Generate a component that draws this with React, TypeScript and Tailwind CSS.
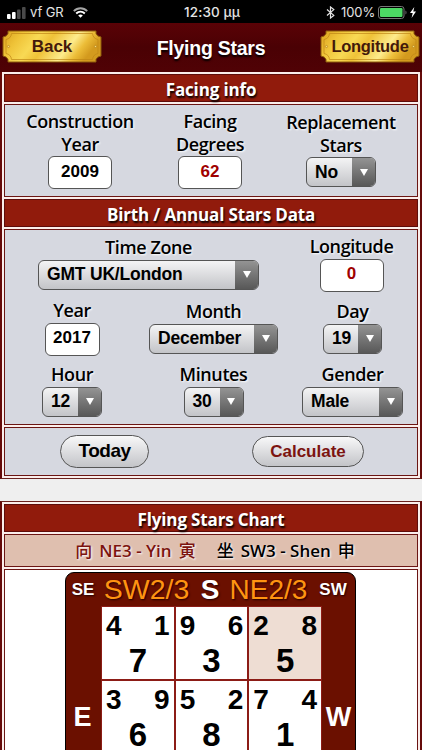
import React from 'react';
import clsx from 'clsx';

const HELVETICA = 'font-["Liberation_Sans",Arial,sans-serif]';
const LABEL = 'font-["Open_Sans","Noto_Sans_CJK_SC",sans-serif]';

function StatusBar() {
  return (
    <div className='relative flex h-[23px] items-center bg-black pl-[7px] pr-[6px] font-["Inter",sans-serif] text-[13px] leading-none text-[#e4e4e4]'>
      <svg className="mt-[2px] h-[12px] w-[19px]" viewBox="0 0 19 12">
        <rect x="0" y="7" width="3.6" height="5" rx="1" fill="#fff" />
        <rect x="5" y="5" width="3.6" height="7" rx="1" fill="#fff" />
        <rect x="10" y="2.5" width="3.6" height="9.5" rx="1" fill="#4a4a4a" />
        <rect x="15" y="0" width="3.6" height="12" rx="1" fill="#4a4a4a" />
      </svg>
      <span className="ml-[4px] mt-px w-[43px] tracking-[-0.1px]">vf GR</span>
      <svg className="mt-px h-[11px] w-[15px]" viewBox="0 0 15 11" fill="none" stroke="#fff">
        <path d="M0.8 4.1C4.6 0.2 10.4 0.2 14.2 4.1" stroke="#a5a5a5" strokeWidth="1.9" />
        <path d="M3.2 6.5C5.7 4 9.3 4 11.8 6.5" strokeWidth="1.9" />
        <path d="M7.5 10.8L5.2 8.4C6.5 7.2 8.5 7.2 9.8 8.4Z" fill="#fff" stroke="none" />
      </svg>
      <span className="absolute inset-x-0 top-[6px] pl-[2px] text-center text-[13.5px] font-medium tracking-[0.1px]">12:30 μμ</span>
      <div className="ml-auto flex items-center">
        <svg className="mt-px h-[13px] w-[9px]" viewBox="0 0 9 13" fill="none" stroke="#e4e4e4" strokeWidth="1.2">
          <path d="M1 3.5L7.8 9.4L4.5 12V1L7.8 3.6L1 9.5" />
        </svg>
        <span className="ml-[6px] mt-px w-[34px] whitespace-nowrap text-[13px] tracking-[-0.1px]">100%</span>
        <svg className="ml-[3px] mt-px h-[13px] w-[30px]" viewBox="0 0 30 13">
          <rect x="0.5" y="0.5" width="25.5" height="12" rx="2.5" fill="none" stroke="#777" />
          <rect x="2" y="2" width="22.5" height="9" rx="1.2" fill="#4cd964" />
          <path d="M27.5 4.5C28.8 5 28.8 8 27.5 8.5Z" fill="#777" />
        </svg>
        <svg className="ml-[2px] mt-px h-[11px] w-[6px]" viewBox="0 0 6 11">
          <path d="M4.3 0L0 6H2.7L1.6 11L6 4.6H3.3Z" fill="#fff" />
        </svg>
      </div>
    </div>
  );
}

// Brass name plate used for the navigation buttons
function Plate({ text, id, className }: { text: string; id: string; className?: string }) {
  return (
    <button className={clsx('relative h-[33px] w-[100px] font-bold text-[#43190b]', HELVETICA, className)}>
      <svg className="absolute inset-0 h-full w-full" viewBox="0 0 100 33" preserveAspectRatio="none">
        <defs>
          <linearGradient id={id} x1="0" y1="0" x2="1" y2="0.25">
            <stop offset="0" stopColor="#d9a01c" />
            <stop offset="0.2" stopColor="#efc338" />
            <stop offset="0.38" stopColor="#f8d954" />
            <stop offset="0.52" stopColor="#efc238" />
            <stop offset="0.75" stopColor="#fdeb8c" />
            <stop offset="0.88" stopColor="#ecbd38" />
            <stop offset="1" stopColor="#d39a1e" />
          </linearGradient>
        </defs>
        <path
          d="M6 1H94V3.5Q95 6.5 99 7V26Q95 26.5 94 29.5V32H6V29.5Q5 26.5 1 26V7Q5 6.5 6 3.5Z"
          fill={`url(#${id})`}
          stroke="#8c5b0c"
        />
        <path
          d="M9.500 3.500H90.500Q91 8.500 96 9.500V23.500Q91 24.500 90.500 29.500H9.500Q9 24.500 4 23.500V9.500Q9 8.500 9.500 3.500Z"
          fill="none"
          stroke="#bf8516"
          strokeWidth="0.7"
        />
        <circle cx="6.500" cy="16.5" r="1.1" fill="#f8df78" stroke="#b07a18" strokeWidth="0.6" />
        <circle cx="93.5" cy="16.5" r="1.1" fill="#f8df78" stroke="#b07a18" strokeWidth="0.6" />
      </svg>
      <span className="relative">{text}</span>
    </button>
  );
}

function SectionTitle({ children }: { children: React.ReactNode }) {
  return (
    <h2
      className={clsx(
        'flex h-[28px] items-center justify-center border border-[#5d0d0b] bg-[#911b0c] pt-[3px] text-[17px] font-bold tracking-[-0.15px] text-white [text-shadow:1px_2px_2px_#000]',
        LABEL,
      )}
    >
      {children}
    </h2>
  );
}

function Field({ label, className, children }: { label: React.ReactNode; className?: string; children: React.ReactNode }) {
  return (
    <div className={clsx('flex flex-col items-center', className)}>
      <div
        className={clsx(
          'mb-px text-center text-[18px] font-semibold leading-[22.5px] tracking-[-0.4px] text-black [text-shadow:1px_1px_2px_#fff]',
          LABEL,
        )}
      >
        {label}
      </div>
      {children}
    </div>
  );
}

function TextBox({ value, className }: { value: string; className?: string }) {
  return (
    <div
      className={clsx(
        'flex h-[33px] items-center justify-center rounded-[6px] border border-[#555] bg-white pb-[2px] text-[17px] font-bold',
        HELVETICA,
        className,
      )}
    >
      {value}
    </div>
  );
}

function SelectBox({ value, className }: { value: string; className?: string }) {
  return (
    <div
      className={clsx(
        'flex h-[30px] overflow-hidden rounded-[6px] border border-[#555] bg-gradient-to-b from-[#f4f4f5] to-[#c3c4c8] text-[17.5px] font-bold text-black',
        HELVETICA,
        className,
      )}
    >
      <span className="flex flex-1 items-center whitespace-nowrap pl-[8px] tracking-[-0.2px]">{value}</span>
      <span className="flex w-[23px] items-center justify-center bg-gradient-to-b from-[#949494] to-[#585858]">
        <svg className="h-[7px] w-[8px]" viewBox="0 0 8 7">
          <path d="M0 0H8L4 7Z" fill="#fff" />
        </svg>
      </span>
    </div>
  );
}

function ChartCell({ left, right, base, tinted }: { left: number; right: number; base: number; tinted?: boolean }) {
  return (
    <div
      className={clsx(
        'h-[72px] text-[28px] font-bold leading-[28px] text-black outline outline-1 outline-[#8c1c16]',
        tinted ? 'bg-[#eeddd3]' : 'bg-white',
      )}
    >
      <div className="flex justify-between px-[4px] pt-[5px]">
        <span>{left}</span>
        <span>{right}</span>
      </div>
      <div className="mt-[8px] text-center text-[33px] leading-[26px]">{base}</div>
    </div>
  );
}

const cells = [
  { left: 4, right: 1, base: 7 },
  { left: 9, right: 6, base: 3 },
  { left: 2, right: 8, base: 5, tinted: true },
  { left: 3, right: 9, base: 6 },
  { left: 5, right: 2, base: 8 },
  { left: 7, right: 4, base: 1 },
];

export default function App() {
  return (
    <div className="h-[750px] w-[422px] overflow-hidden bg-[#efefef]">
      <StatusBar />

      <header className="flex h-[49px] items-start bg-gradient-to-b from-[#5a0206] via-[#4a0104] to-[#500205] px-[2px] pt-[7px]">
        <Plate text="Back" id="plate-back" className="text-[17px]" />
        <h1
          className={clsx(
            'flex-1 pt-[6px] text-center text-[19.5px] font-bold leading-[24px] tracking-[-0.25px] text-white [text-shadow:0_2px_2px_#000]',
            HELVETICA,
          )}
        >
          Flying Stars
        </h1>
        <Plate text="Longitude" id="plate-longitude" className="text-[16.5px] tracking-[-0.3px]" />
      </header>

      {/* Input form */}
      <section className="flex h-[407px] flex-col gap-[2px] border-x-2 border-b border-x-[#650b0a] border-b-[#6b2320] bg-[#fbeeeb] px-[2px] pb-[2px] pt-[2px]">
        <SectionTitle>Facing info</SectionTitle>
        <div className="grid h-[93px] grid-cols-[150px_110px_152px] items-start border border-[#6b1513] bg-[#d6d8e0] pt-[5px]">
          <Field label={<>Construction<br />Year</>}>
            <TextBox value="2009" className="w-[64px] text-black" />
          </Field>
          <Field label={<>Facing<br />Degrees</>}>
            <TextBox value="62" className="w-[64px] text-[#a00000]" />
          </Field>
          <Field label={<>Replacement<br />Stars</>} className="pt-px">
            <SelectBox value="No" className="w-[70px]" />
          </Field>
        </div>

        <SectionTitle>Birth / Annual Stars Data</SectionTitle>
        <div className="grid h-[196px] grid-cols-[134px_147px_131px] grid-rows-[64px_64px_64px] items-start border border-[#6b1513] bg-[#d6d8e0] pt-[5px]">
          <Field label="Time Zone" className="col-span-2 pl-[6px] pt-px">
            <SelectBox value="GMT UK/London" className="w-[221px] text-[17.2px]" />
          </Field>
          <Field label="Longitude">
            <TextBox value="0" className="w-[64px] text-[#a00000]" />
          </Field>
          <Field label="Year">
            <TextBox value="2017" className="w-[55px] text-black" />
          </Field>
          <Field label="Month" className="pl-[2px] pt-px">
            <SelectBox value="December" className="w-[129px]" />
          </Field>
          <Field label="Day" className="pl-[2px] pt-px">
            <SelectBox value="19" className="w-[59px]" />
          </Field>
          <Field label="Hour">
            <SelectBox value="12" className="w-[60px]" />
          </Field>
          <Field label="Minutes" className="pl-[2px]">
            <SelectBox value="30" className="w-[60px]" />
          </Field>
          <Field label="Gender" className="pl-[2px]">
            <SelectBox value="Male" className="w-[101px]" />
          </Field>
        </div>

        <div
          className={clsx(
            'flex h-[49px] items-center justify-between border border-[#6b1513] bg-[#d6d8e0] pl-[55px] pr-[53px] font-bold',
            HELVETICA,
          )}
        >
          <button className="h-[33px] w-[89px] rounded-full border border-[#555] bg-gradient-to-b from-[#f8f8f9] to-[#c3c4c8] text-[19px] tracking-[-0.5px] text-black">
            Today
          </button>
          <button className="h-[31px] w-[112px] rounded-full border border-[#555] bg-gradient-to-b from-[#f8f8f9] to-[#c3c4c8] text-[17px] text-[#7c1410]">
            Calculate
          </button>
        </div>
      </section>

      {/* Chart */}
      <section className="mt-[22px] flex flex-col gap-[2px] border-x-2 border-t border-x-[#650b0a] border-t-[#6b2320] bg-[#fbeeeb] px-[2px] pt-[2px]">
        <SectionTitle>Flying Stars Chart</SectionTitle>
        <div
          className={clsx(
            'flex h-[33px] items-center justify-center gap-[21px] border border-[#6b1513] bg-[#dfbfaf] pl-[8px] text-[17px] font-semibold [text-shadow:1px_1px_2px_#fff]',
            LABEL,
          )}
        >
          <span className="flex items-center gap-[7px] text-[#7c1410]">
            <span className="font-medium">向</span>
            <span>NE3 - Yin</span>
            <span className="font-medium">寅</span>
          </span>
          <span className="flex items-center gap-[7px] text-black">
            <span className="font-medium">坐</span>
            <span>SW3 - Shen</span>
            <span className="font-medium">申</span>
          </span>
        </div>

        <div className={clsx('h-[190px] border border-[#6b1513] bg-white pl-[60px] pt-[2px]', HELVETICA)}>
          <div className="h-[200px] w-[291px] rounded-t-[9px] border border-black bg-[#6b1000]">
            <div className="grid h-[33px] grid-cols-[34px_93px_34px_83px_45px] items-center justify-items-center leading-none [text-shadow:1px_1px_2px_#200]">
              <span className="text-[17px] font-bold text-white">SE</span>
              <span className="text-[28.5px]">
                <span className="text-[#ff9411]">SW2/3</span>
              </span>
              <span className="text-[28px] font-bold text-white">S</span>
              <span className="text-[28px] text-[#ff9411]">NE2/3</span>
              <span className="pl-px text-[17px] font-bold text-white">SW</span>
            </div>
            <div className="flex text-[27px] font-bold text-white">
              <div className="w-[35px] pr-[2px] pt-[91px] text-center">E</div>
              <div className="grid w-[221px] grid-cols-3 gap-[2px] border border-black bg-[#5c0b05]">
                {cells.map((cell, i) => (
                  <ChartCell key={i} {...cell} />
                ))}
              </div>
              <div className="w-[33px] pt-[91px] text-center">W</div>
            </div>
          </div>
        </div>
      </section>
    </div>
  );
}
